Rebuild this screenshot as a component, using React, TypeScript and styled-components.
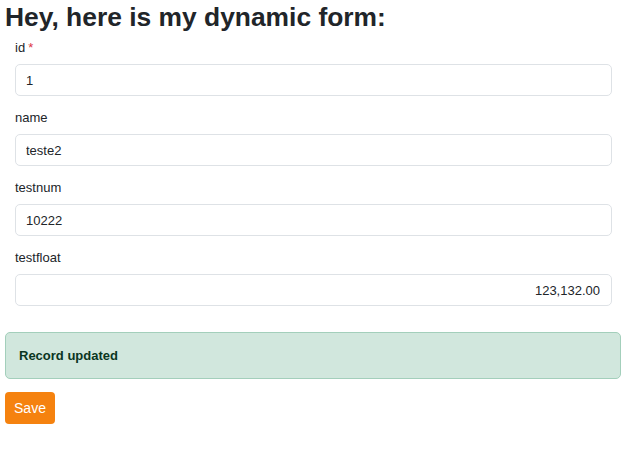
import React from "react";
import styled, { createGlobalStyle } from "styled-components";

const GlobalStyle = createGlobalStyle`
  body {
    margin: 0;
    background: #fff;
    font-family: "Liberation Sans", Arial, sans-serif;
    color: #212529;
  }
`;

const Page = styled.div`
  padding: 0 6px 0 5px;
`;

const Title = styled.h1`
  margin: 2px 0 3px;
  font-size: 26.4px;
  line-height: 31px;
  font-weight: 700;
  color: #212529;
`;

const Form = styled.form`
  display: flex;
  flex-direction: column;
`;

const Fields = styled.div`
  padding: 0 9px 0 10px;
`;

const Field = styled.div`
  padding-bottom: 10px;
`;

const Label = styled.label`
  display: block;
  font-size: 13px;
  line-height: 20px;
  padding-top: 2px;
  margin-bottom: 6px;
`;

const Required = styled.span`
  color: #dc3545;
  margin-left: 3px;
`;

const Input = styled.input<{ $align?: "left" | "right" }>`
  box-sizing: border-box;
  display: block;
  width: 100%;
  height: 32px;
  padding: 0 11px 0 10px;
  font-family: inherit;
  font-size: 13px;
  color: #212529;
  background: #fff;
  border: 1px solid #dee2e6;
  border-radius: 5px;
  text-align: ${({ $align }) => $align ?? "left"};
  outline: none;
`;

const Alert = styled.div`
  box-sizing: border-box;
  margin-top: 16px;
  height: 47px;
  display: flex;
  align-items: center;
  padding: 0 13px;
  background: #d1e7dd;
  border: 1px solid #a3cfbb;
  border-radius: 5px;
  color: #0a3622;
  font-size: 13px;
  font-weight: 700;
`;

const SaveButton = styled.button`
  align-self: flex-start;
  margin-top: 13px;
  height: 32px;
  width: 50px;
  padding: 0;
  border: none;
  border-radius: 4px;
  background: #f5820f;
  color: #fff;
  font-family: inherit;
  font-size: 14px;
  cursor: pointer;
`;

type FieldDef = {
  name: string;
  value: string;
  required?: boolean;
  align?: "left" | "right";
};

const fields: FieldDef[] = [
  { name: "id", value: "1", required: true },
  { name: "name", value: "teste2" },
  { name: "testnum", value: "10222" },
  { name: "testfloat", value: "123,132.00", align: "right" },
];

export default function App() {
  return (
    <>
      <GlobalStyle />
      <Page>
        <Title>Hey, here is my dynamic form:</Title>
        <Form onSubmit={(e) => e.preventDefault()}>
          <Fields>
            {fields.map((f) => (
              <Field key={f.name}>
                <Label htmlFor={f.name}>
                  {f.name}
                  {f.required && <Required>*</Required>}
                </Label>
                <Input id={f.name} defaultValue={f.value} $align={f.align} />
              </Field>
            ))}
          </Fields>
          <Alert>Record updated</Alert>
          <SaveButton type="submit">Save</SaveButton>
        </Form>
      </Page>
    </>
  );
}
